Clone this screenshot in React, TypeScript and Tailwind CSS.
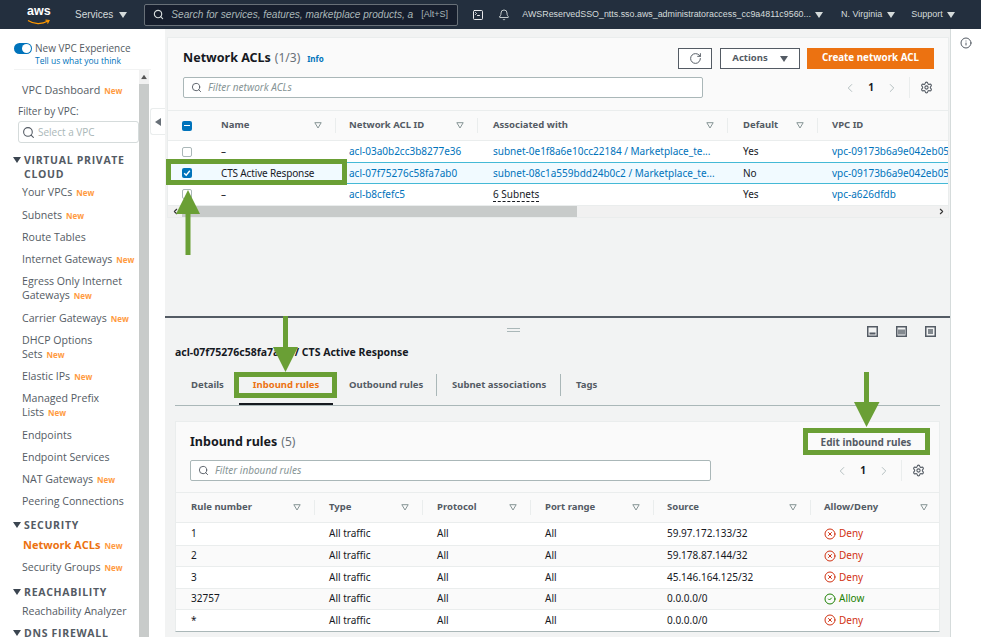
import { Bell, ChevronLeft, ChevronRight, CircleCheck, CircleX, Info, RotateCw, Search, Settings, SquareTerminal } from 'lucide-react';

const navFont = "[font-family:'Open_Sans',sans-serif]";

const Caret = ({ className = '' }: { className?: string }) => (
  <svg width="8" height="6" viewBox="0 0 8 6" className={className}>
    <path d="M0 0h8L4 6z" fill="currentColor" />
  </svg>
);

const SortCaret = () => (
  <svg width="8" height="7" viewBox="0 0 8 7" className="text-[#879596] shrink-0">
    <path d="M.8.7h6.4L4 6z" fill="none" stroke="currentColor" strokeWidth="1" />
  </svg>
);

const NewTag = () => (
  <span className="ml-[4px] text-[8px] leading-none font-bold text-[#ff9b3f]">New</span>
);

const NavItem = ({ label, second, isNew, active }: { label: string; second?: string; isNew?: boolean; active?: boolean }) => (
  <div className={`mt-[8.25px] leading-[14px] ${active ? 'ml-[23px] text-[11px] font-bold text-[#ec7211]' : 'ml-[22px] text-[10.6px] text-[#545b64]'}`}>
    <div className="whitespace-nowrap">
      {label}
      {!second && isNew && <NewTag />}
    </div>
    {second && (
      <div className="whitespace-nowrap">
        {second}
        {isNew && <NewTag />}
      </div>
    )}
  </div>
);

const NavSection = ({ title, top }: { title: string[]; top: string }) => (
  <div className={`relative ml-[24px] ${top} text-[10.5px] leading-[14px] font-bold tracking-[0.7px] text-[#545b64] whitespace-nowrap`}>
    <Caret className="absolute -left-[11px] top-[4px] text-[#3b4550]" />
    {title.map((t) => (
      <div key={t}>{t}</div>
    ))}
  </div>
);

const Sidebar = () => (
  <aside className={`w-[165px] shrink-0 bg-white flex flex-col ${navFont}`}>
    <div className="h-[41px] mx-[14px] flex shrink-0 pt-[12px] border-b border-[#f2f3f3]">
      <div className="w-[18px] h-[11px] rounded-full bg-[#0073bb] flex justify-end items-center pr-[1px] mt-[2px]">
        <div className="w-[9px] h-[9px] rounded-full bg-white" />
      </div>
      <div className="ml-[3px] whitespace-nowrap">
        <div className="text-[10px] leading-[14px] text-[#545b64]">New VPC Experience</div>
        <div className="text-[8.5px] leading-[11px] text-[#0073bb]">Tell us what you think</div>
      </div>
    </div>
    <div className="flex flex-1 min-h-0">
      <div className="w-[139px] shrink-0 overflow-hidden">
        <div className="mt-[9px] ml-[22px] text-[10.8px] leading-[22px] text-[#545b64] whitespace-nowrap">
          VPC Dashboard<NewTag />
        </div>
        <div className="mt-[3px] ml-[18px] text-[10px] leading-[14px] text-[#545b64]">Filter by VPC:</div>
        <div className="mt-[3px] ml-[18px] w-[121px] h-[22px] border border-[#d5dbdb] rounded-[3px] flex items-center pl-[3px] text-[10px] text-[#aab7b8]">
          <Search size={13} strokeWidth={2} className="text-[#545b64] mr-[3px]" />
          Select a VPC
        </div>
        <NavSection title={['VIRTUAL PRIVATE', 'CLOUD']} top="mt-[10px]" />
        <div className="-mt-[4px]">
          <NavItem label="Your VPCs" isNew />
          <NavItem label="Subnets" isNew />
          <NavItem label="Route Tables" />
          <NavItem label="Internet Gateways" isNew />
          <NavItem label="Egress Only Internet" second="Gateways" isNew />
          <NavItem label="Carrier Gateways" isNew />
          <NavItem label="DHCP Options" second="Sets" isNew />
          <NavItem label="Elastic IPs" isNew />
          <NavItem label="Managed Prefix" second="Lists" isNew />
          <NavItem label="Endpoints" />
          <NavItem label="Endpoint Services" />
          <NavItem label="NAT Gateways" isNew />
          <NavItem label="Peering Connections" />
        </div>
        <NavSection title={['SECURITY']} top="mt-[10px]" />
        <div className="-mt-[3px]">
          <NavItem label="Network ACLs" isNew active />
          <NavItem label="Security Groups" isNew />
        </div>
        <NavSection title={['REACHABILITY']} top="mt-[11px]" />
        <div className="-mt-[3px]">
          <NavItem label="Reachability Analyzer" />
        </div>
        <NavSection title={['DNS FIREWALL']} top="mt-[8px]" />
      </div>
      <div className="w-[10px] shrink-0 bg-[#f1f1f1] flex flex-col">
        <div className="h-[14px] flex items-center justify-center text-[#555]">
          <Caret className="rotate-180 scale-75" />
        </div>
        <div className="flex-1 bg-[#c8cbca]" />
      </div>
      <div className="flex-1 pt-[38px]">
        <div className="ml-[1px] w-[15px] h-[27px] rounded-l-[3px] border border-r-0 border-[#eaeded] flex items-center justify-center">
          <Caret className="rotate-90 text-[#687078]" />
        </div>
      </div>
    </div>
  </aside>
);

const Checkbox = ({ state }: { state?: 'checked' | 'mixed' }) => (
  <div className={`w-[10px] h-[10px] rounded-[2px] flex items-center justify-center ${state ? 'bg-[#0073bb]' : 'bg-white border border-[#aab7b8]'}`}>
    {state === 'checked' && (
      <svg width="8" height="8" viewBox="0 0 8 8">
        <path d="M1.2 4.2 3.2 6.2 6.8 1.8" fill="none" stroke="white" strokeWidth="1.4" />
      </svg>
    )}
    {state === 'mixed' && <div className="w-[6px] h-[1.5px] bg-white" />}
  </div>
);

const HeadCell = ({ label, width, sep }: { label: string; width: string; sep: string }) => (
  <div className={`${width} shrink-0`}>
    <div className={`${sep} h-[15px] flex items-center justify-between pr-[13px] border-r border-[#eaeded]`}>
      <span>{label}</span>
      <SortCaret />
    </div>
  </div>
);

const TopRow = ({ name, id, assoc, def, vpc, selected, link }: { name: string; id: string; assoc: string; def: string; vpc: string; selected?: boolean; link?: boolean }) => (
  <div className={`h-[21.4px] flex items-center text-[10px] text-[#16191f] whitespace-nowrap ${selected ? 'bg-[#f1faff] border-y-[1.5px] border-[#44b9d6]' : 'bg-white'}`}>
    <div className="w-[53px] shrink-0 pl-[14px]">
      <Checkbox state={selected ? 'checked' : undefined} />
    </div>
    <div className="w-[128px] shrink-0 tracking-[-0.15px]">{name}</div>
    <div className="w-[144px] shrink-0 text-[#0073bb]">{id}</div>
    <div className="w-[250px] shrink-0">
      {link ? <span className="text-[#0073bb]">{assoc}</span> : <span className="border-b border-dashed border-[#16191f]">{assoc}</span>}
    </div>
    <div className="w-[89px] shrink-0">{def}</div>
    <div className="text-[#0073bb]">{vpc}</div>
  </div>
);

const Pager = () => (
  <div className="flex items-center h-[21px]">
    <ChevronLeft size={14} strokeWidth={1.5} className="text-[#aab7b8]" />
    <span className="mx-[11px] text-[10px] font-bold text-[#16191f]">1</span>
    <ChevronRight size={14} strokeWidth={1.5} className="text-[#aab7b8]" />
    <div className="w-px h-[21px] bg-[#eaeded] mx-[10px]" />
    <Settings size={13} strokeWidth={2} className="text-[#545b64]" />
  </div>
);

const FilterBox = ({ text, width }: { text: string; width: string }) => (
  <div className={`${width} h-[21px] bg-white border border-[#aab7b8] rounded-[2px] flex items-center pl-[7px] text-[10px] italic text-[#879596]`}>
    <Search size={11} strokeWidth={2} className="text-[#545b64] mr-[6px] not-italic" />
    {text}
  </div>
);

const NetworkAcls = () => (
  <section className="mt-[8px] ml-[2px] mr-px border border-[#eaeded] bg-[#fafafa] flex flex-col">
    <div className="h-[34px] flex items-start pl-[15px] pr-[15px] pt-[10px]">
      <div className="flex items-baseline whitespace-nowrap mt-[1px]">
        <span className="text-[12.5px] font-bold text-[#16191f]">Network ACLs</span>
        <span className="ml-[4px] text-[12px] text-[#687078]">(1/3)</span>
        <span className="ml-[7px] text-[8px] font-bold text-[#0073bb]">Info</span>
      </div>
      <div className="ml-auto flex mr-[-1px]">
        <div className="w-[34px] h-[21px] bg-white border border-[#545b64] flex items-center justify-center">
          <RotateCw size={13} strokeWidth={1.8} className="text-[#545b64]" />
        </div>
        <div className="ml-[8px] w-[80px] h-[21px] bg-white border border-[#545b64] flex items-center justify-center gap-[12px] text-[9.5px] font-bold text-[#545b64]">
          Actions
          <Caret />
        </div>
        <div className="ml-[7px] w-[127px] h-[21px] bg-[#ec7211] flex items-center justify-center text-[9.8px] font-bold text-white">Create network ACL</div>
      </div>
    </div>
    <div className="h-[27px] pl-[15px] pr-[15px] pt-[5px] flex items-start">
      <FilterBox text="Filter network ACLs" width="w-[520px]" />
      <div className="ml-auto">
        <Pager />
      </div>
    </div>
    <div className="mt-[11px] h-[31px] border-y border-[#eaeded] flex items-center text-[9.5px] font-bold text-[#545b64] whitespace-nowrap">
      <div className="w-[53px] shrink-0 pl-[14px]">
        <Checkbox state="mixed" />
      </div>
      <HeadCell label="Name" width="w-[128px]" sep="w-[115px]" />
      <HeadCell label="Network ACL ID" width="w-[144px]" sep="w-[129px]" />
      <HeadCell label="Associated with" width="w-[250px]" sep="w-[235px]" />
      <HeadCell label="Default" width="w-[89px]" sep="w-[75px]" />
      <div>VPC ID</div>
    </div>
    <div className="overflow-hidden">
      <TopRow name="–" id="acl-03a0b2cc3b8277e36" assoc="subnet-0e1f8a6e10cc22184 / Marketplace_te..." def="Yes" vpc="vpc-09173b6a9e042eb05" link />
      <TopRow name="CTS Active Response" id="acl-07f75276c58fa7ab0" assoc="subnet-08c1a559bdd24b0c2 / Marketplace_te..." def="No" vpc="vpc-09173b6a9e042eb05" link selected />
      <TopRow name="–" id="acl-b8cfefc5" assoc="6 Subnets" def="Yes" vpc="vpc-a626dfdb" />
    </div>
    <div className="h-[12px] bg-[#f1f1f1] flex items-center border-t border-[#eaeded]">
      <div className="w-[14px] flex justify-center">
        <ChevronLeft size={9} strokeWidth={3} className="text-[#333]" />
      </div>
      <div className="w-[395px] h-full bg-[#c8cbca]" />
      <div className="ml-auto w-[14px] flex justify-center">
        <ChevronRight size={9} strokeWidth={3} className="text-[#333]" />
      </div>
    </div>
  </section>
);

const PaneIcon = ({ kind }: { kind: 'bottom' | 'middle' | 'full' }) => (
  <svg width="11" height="11" viewBox="0 0 11 11" className="text-[#545b64]">
    <rect x=".75" y=".75" width="9.5" height="9.5" fill="none" stroke="currentColor" strokeWidth="1.5" />
    {kind === 'bottom' && <rect x="2.5" y="6.5" width="6" height="2" fill="currentColor" />}
    {kind === 'middle' && <rect x="2" y="3.5" width="7" height="5" fill="currentColor" opacity=".7" />}
    {kind === 'full' && <rect x="3" y="3" width="5" height="5" fill="currentColor" opacity=".7" />}
  </svg>
);

const rules = [
  { num: '1', source: '59.97.172.133/32', allow: false },
  { num: '2', source: '59.178.87.144/32', allow: false },
  { num: '3', source: '45.146.164.125/32', allow: false },
  { num: '32757', source: '0.0.0.0/0', allow: true },
  { num: '*', source: '0.0.0.0/0', allow: false },
];

const InboundRules = () => (
  <section className="mt-[15px] mx-[10px] border border-[#eaeded] border-b-[#aab7b8] bg-[#fafafa]">
    <div className="h-[38px] pl-[14px] pr-[12px] flex items-center">
      <div className="whitespace-nowrap -mt-[2px]">
        <span className="text-[12.5px] font-bold text-[#16191f]">Inbound rules</span>
        <span className="ml-[4px] text-[12px] text-[#687078]">(5)</span>
      </div>
      <div className="ml-auto w-[114px] h-[17px] mt-[2px] flex items-center justify-center text-[10px] font-bold text-[#545b64] mr-[4px] whitespace-nowrap">Edit inbound rules</div>
    </div>
    <div className="pl-[14px] pr-[14px] flex items-start">
      <FilterBox text="Filter inbound rules" width="w-[521px]" />
      <div className="ml-auto">
        <Pager />
      </div>
    </div>
    <div className="mt-[11px] h-[31px] border-y border-[#eaeded] flex items-center pl-[15px] text-[9.5px] font-bold text-[#545b64] whitespace-nowrap">
      <HeadCell label="Rule number" width="w-[138px]" sep="w-[124px]" />
      <HeadCell label="Type" width="w-[108px]" sep="w-[94px]" />
      <HeadCell label="Protocol" width="w-[108px]" sep="w-[94px]" />
      <HeadCell label="Port range" width="w-[122px]" sep="w-[109px]" />
      <HeadCell label="Source" width="w-[157px]" sep="w-[144px]" />
      <div className="w-[104px] flex items-center justify-between">
        Allow/Deny
        <SortCaret />
      </div>
    </div>
    {rules.map((r, i) => (
      <div key={r.num} className={`h-[21.5px] flex items-center text-[10px] text-[#16191f] whitespace-nowrap ${i > 0 ? 'border-t border-[#eaeded]' : ''} ${i % 2 ? 'bg-[#fafafa]' : 'bg-white'}`}>
        <div className="w-[153px] shrink-0 pl-[15px]">{r.num}</div>
        <div className="w-[108px] shrink-0">All traffic</div>
        <div className="w-[108px] shrink-0">All</div>
        <div className="w-[122px] shrink-0">All</div>
        <div className="w-[157px] shrink-0">{r.source}</div>
        <div className={`flex items-center gap-[3px] ${r.allow ? 'text-[#1d8102]' : 'text-[#d13212]'}`}>
          {r.allow ? <CircleCheck size={12} strokeWidth={2} /> : <CircleX size={12} strokeWidth={2} />}
          {r.allow ? 'Allow' : 'Deny'}
        </div>
      </div>
    ))}
  </section>
);

const SplitPanel = () => (
  <section className="flex-1 min-h-0 border-t-2 border-[#545b64] flex flex-col">
    <div className="h-[28px] relative shrink-0">
      <div className="absolute left-[342px] top-[10px] w-[13px] h-[4px] border-y border-[#aab7b8]" />
      <div className="absolute right-[14px] top-[8px] flex gap-[18px]">
        <PaneIcon kind="bottom" />
        <PaneIcon kind="middle" />
        <PaneIcon kind="full" />
      </div>
    </div>
    <h2 className="pl-[10px] -mt-[1px] text-[10.5px] leading-[14px] font-bold text-[#16191f]">acl-07f75276c58fa7ab0 / CTS Active Response</h2>
    <div className="mx-[10px] mt-[11px] h-[36px] border-b border-[#aab7b8] flex items-start pt-[4px] text-[9.5px] font-bold text-[#545b64] whitespace-nowrap">
      <div className="w-[64px] pl-[16px] h-[22px] leading-[22px]">Details</div>
      <div className="w-[94px] h-[31px] leading-[22px] text-center text-[#ec7211] border-b-2 border-[#16191f]">Inbound rules</div>
      <div className="w-[104px] pl-[16px] h-[22px] leading-[22px] border-r border-[#aab7b8]">Outbound rules</div>
      <div className="w-[124px] pl-[15px] h-[22px] leading-[22px] border-r border-[#aab7b8]">Subnet associations</div>
      <div className="pl-[15px] h-[22px] leading-[22px]">Tags</div>
    </div>
    <InboundRules />
  </section>
);

const Annotations = () => (
  <>
    <div className="absolute left-[166px] top-[159px] w-[181px] h-[26px] border-[5px] border-[#6a9f35]" />
    <div className="absolute left-[234px] top-[372px] w-[103px] h-[26px] border-[5px] border-[#6a9f35]" />
    <div className="absolute left-[803px] top-[428px] w-[127px] h-[27px] border-[5px] border-[#6a9f35]" />
    <svg width="981" height="637" viewBox="0 0 981 637" className="absolute left-0 top-0 pointer-events-none">
      <path d="M188 190 200 214H190.500V255H185.500V214H176z" fill="#6a9f35" />
      <path d="M283 316H288V347H298L285.500 372 273 347H283z" fill="#6a9f35" />
      <path d="M864 372H869V402H879.500L866.500 427 854 402H864z" fill="#6a9f35" />
    </svg>
  </>
);

const TopBar = () => (
  <header className="h-[29px] shrink-0 bg-[#232f3e] flex items-center text-[#d5dbdb] text-[10px] whitespace-nowrap [font-family:'Liberation_Sans',sans-serif]">
    <div className="relative ml-[27px] w-[23px] h-[22px] shrink-0">
      <span className="absolute left-0 -top-[1px] text-[12.5px] leading-[17px] font-bold text-white">aws</span>
      <svg width="24" height="6" viewBox="0 0 24 6" className="absolute left-0 top-[15px]">
        <path d="M1 1.500C7 5.500 15 5.500 21 2M18.500 1.200 22 1.500 20.500 4.500" fill="none" stroke="#ff9900" strokeWidth="1.200" />
      </svg>
    </div>
    <span className="ml-[25px] text-[10px]">Services</span>
    <Caret className="ml-[6px]" />
    <div className="ml-[17px] w-[314px] h-[22px] bg-[#161e2d] border border-[#687078] rounded-[2px] flex items-center pl-[8px] text-[#aab7b8] overflow-hidden">
      <Search size={11} strokeWidth={2.5} className="text-[#d5dbdb] shrink-0" />
      <span className="ml-[7px] w-[241px] shrink-0 italic text-[10.1px]">Search for services, features, marketplace products, a</span>
      <span className="ml-[9px] text-[9px]">[Alt+S]</span>
    </div>
    <SquareTerminal size={12} strokeWidth={1.8} className="ml-[14px] text-white" />
    <Bell size={12} strokeWidth={1.8} className="ml-[14px] text-[#d5dbdb]" />
    <span className="ml-[12px] text-[8.9px]">AWSReservedSSO_ntts.sso.aws_administratoraccess_cc9a4811c9560...</span>
    <Caret className="ml-[4px]" />
    <span className="ml-[18px] text-[9px]">N. Virginia</span>
    <Caret className="ml-[5px]" />
    <span className="ml-[16px] text-[9px]">Support</span>
    <Caret className="ml-[4px]" />
  </header>
);

const App = () => (
  <div className="relative w-[981px] h-[637px] overflow-hidden bg-white flex flex-col">
    <TopBar />
    <div className="flex flex-1 min-h-0">
      <Sidebar />
      <main className="w-[786px] shrink-0 bg-[#f2f3f3] border-r border-[#d5dbdb] flex flex-col [font-family:'Noto_Sans',sans-serif]">
        <div className="h-[287px] shrink-0">
          <NetworkAcls />
        </div>
        <SplitPanel />
      </main>
      <div className="flex-1 flex justify-center pt-[8px]">
        <Info size={12} strokeWidth={2} className="text-[#545b64]" />
      </div>
    </div>
    <Annotations />
  </div>
);

export default App;
